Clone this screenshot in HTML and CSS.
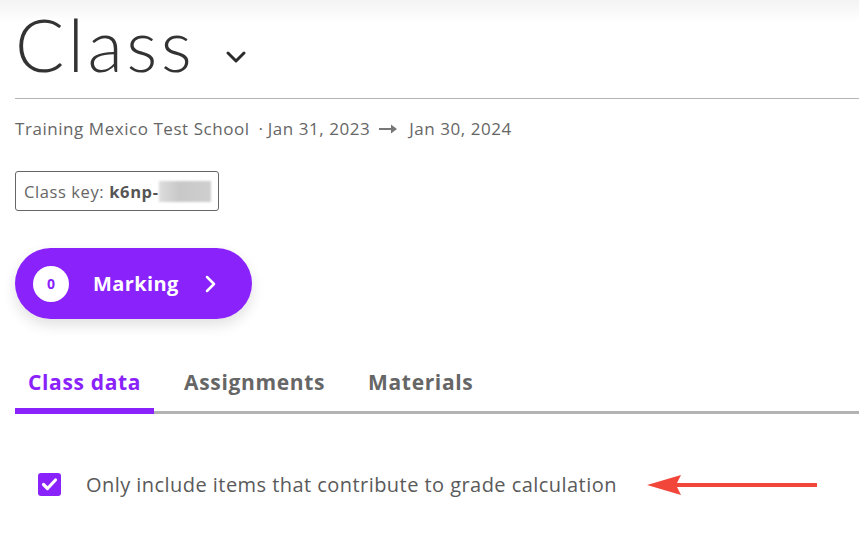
FILE: index.html
```html
<!DOCTYPE html>
<html>
<head>
<meta charset="utf-8">
<link rel="stylesheet" href="styles.css">
</head>
<body>
<main class="page">
  <header class="title-row">
    <h1 class="title">Class</h1>
    <svg class="caret" width="22" height="14" viewBox="0 0 22 14"><path d="M3 3 L11 11 L19 3" fill="none" stroke="#2b2b2b" stroke-width="3" stroke-linecap="round" stroke-linejoin="round"/></svg>
  </header>
  <div class="rule"></div>
  <p class="meta">Training Mexico Test School <span class="dot">·</span>Jan 31, 2023<svg class="arrow" width="18" height="10" viewBox="0 0 18 10"><path d="M0 4 H12 V0.5 L18 5 L12 9.5 V6 H0 Z" fill="#777"/></svg>Jan 30, 2024</p>
  <div class="key">Class key: <b>k6np-</b><span class="blur"></span></div>
  <button class="marking">
    <span class="count">0</span>
    <span class="mlabel">Marking</span>
    <svg class="chev" width="14" height="20" viewBox="0 0 14 20"><path d="M3 3 L10 10 L3 17" fill="none" stroke="#fff" stroke-width="2.5" stroke-linecap="round" stroke-linejoin="round"/></svg>
  </button>
  <nav class="tabs">
    <div class="tab active">Class data</div>
    <div class="tab">Assignments</div>
    <div class="tab">Materials</div>
  </nav>
  <div class="option">
    <span class="check"><svg width="23" height="23" viewBox="0 0 23 23"><path d="M5.5 11.5 L9.5 15.5 L17.5 7" fill="none" stroke="#fff" stroke-width="3.2" stroke-linecap="round" stroke-linejoin="round"/></svg></span>
    <span class="olabel">Only include items that contribute to grade calculation</span>
    <svg class="redarrow" width="172" height="24" viewBox="0 0 172 24"><polygon points="0,12 34,2 30,10 170,10 170,14 30,14 34,22" fill="#f2463a"/></svg>
  </div>
</main>
</body>
</html>
```

FILE: styles.css
```css
html, body {
  margin: 0;
  padding: 0;
  font-family: "Open Sans", Lato, sans-serif;
  overflow: hidden;
}
body {
  background: #fff linear-gradient(#f3f3f3, #ffffff 22px) no-repeat;
  min-height: 551px;
}
.page {
  padding-left: 15px;
}
.title-row {
  display: flex;
  align-items: flex-start;
  height: 98px;
}
.title {
  margin: 0;
  font-family: Lato, "Open Sans", sans-serif;
  font-weight: 300;
  font-size: 73px;
  color: #333;
  letter-spacing: 3.5px;
  line-height: normal;
}
.caret {
  margin-left: 30px;
  margin-top: 50px;
}
.rule {
  height: 1px;
  background: #b5b5b5;
}
.meta {
  display: flex;
  align-items: center;
  margin: 18px 0 0 0;
  font-size: 17px;
  letter-spacing: 0.55px;
  color: #666;
  line-height: 23px;
  white-space: pre;
}
.dot { margin: 0 4px 0 4px; }
.arrow { margin: 1px 12px 0 9px; }
.key {
  display: inline-flex;
  align-items: center;
  margin-top: 31px;
  height: 38px;
  padding: 0 7px 0 8px;
  border: 1px solid #666;
  border-radius: 3px;
  font-size: 16.5px;
  letter-spacing: 0.6px;
  color: #666;
}
.key b { color: #555; margin-left: 5px; }
.blur {
  display: inline-block;
  width: 52px;
  height: 21px;
  background: linear-gradient(90deg, #ddd, #c8c8c8 40%, #cfcfcf);
  filter: blur(1px);
}
.marking {
  display: flex;
  align-items: center;
  margin-top: 37px;
  width: 237px;
  height: 71px;
  padding: 0 0 0 18px;
  border: none;
  border-radius: 36px;
  background: #8a22fc;
  box-shadow: 0 6px 14px rgba(0,0,0,0.12);
  font-family: inherit;
  cursor: pointer;
}
.count {
  display: flex;
  align-items: center;
  justify-content: center;
  width: 36px;
  height: 36px;
  border-radius: 50%;
  background: #fff;
  color: #8a22fc;
  font-weight: 700;
  font-size: 14px;
}
.mlabel {
  margin-left: 24px;
  color: #fff;
  font-weight: 700;
  font-size: 20px;
  letter-spacing: 0.4px;
}
.chev { margin-left: 25px; }
.tabs {
  display: flex;
  margin-top: 37px;
  border-bottom: 3px solid #b3b3b3;
}
.tab {
  padding: 12px 13px 12px;
  font-size: 21px;
  font-weight: 700;
  letter-spacing: 0.65px;
  color: #666;
  margin-right: 17px;
  margin-bottom: -3px;
  border-bottom: 6px solid transparent;
}
.tab.active {
  color: #8a22fc;
  border-bottom-color: #8a22fc;
  padding-bottom: 9px;
  margin-right: 17px;
}
.option {
  display: flex;
  align-items: center;
  margin-top: 57px;
  padding-left: 23px;
}
.check {
  display: flex;
  width: 23px;
  height: 23px;
  border-radius: 3px;
  background: #8a22fc;
}
.olabel {
  margin-left: 25px;
  font-size: 20px;
  letter-spacing: 0.45px;
  color: #5a5a5a;
}
.redarrow { margin-left: 30px; }
```
